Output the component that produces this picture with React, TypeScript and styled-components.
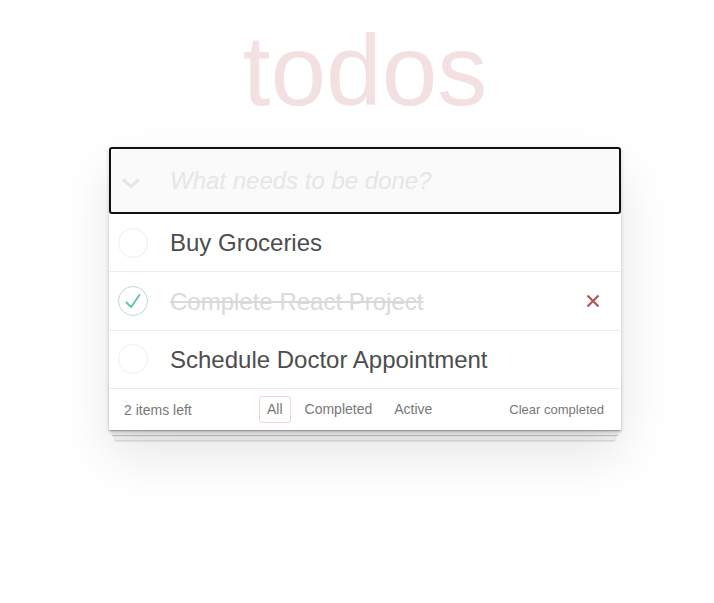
import React from 'react';
import styled, {createGlobalStyle} from 'styled-components';

type TodoType = {
    id: number
    title: string
    done: boolean
}

const todos: TodoType[] = [
    {id: 1, title: 'Buy Groceries', done: false},
    {id: 2, title: 'Complete React Project', done: true},
    {id: 3, title: 'Schedule Doctor Appointment', done: false},
]

const filters = ['All', 'Completed', 'Active']

const GlobalStyle = createGlobalStyle`
  body {
    margin: 0;
    background: #fff;
    font-family: "Liberation Sans", Arial, sans-serif;
    color: #4d4d4d;
  }
`

const Check = ({done}: {done: boolean}) => (
    <CheckBox $done={done}>
        {done && (
            <svg width="22" height="22" viewBox="0 0 22 22">
                <path d="M4.5 12.5 L9 17 L17.5 5" fill="none" stroke="#5dc2af" strokeWidth="1.8" strokeLinecap="round"/>
            </svg>
        )}
    </CheckBox>
)

export default function App() {
    const left = todos.filter(t => !t.done).length
    return (
        <Page>
            <GlobalStyle/>
            <Title>todos</Title>
            <Card>
                <Header>
                    <ToggleAll>
                        <svg width="20" height="12" viewBox="0 0 20 12">
                            <path d="M2 2.5 L10 9.5 L18 2.5" fill="none" stroke="#e6e6e6" strokeWidth="3"/>
                        </svg>
                    </ToggleAll>
                    <NewTodo placeholder="What needs to be done?"/>
                </Header>
                <List>
                    {todos.map(t => (
                        <Item key={t.id}>
                            <Check done={t.done}/>
                            <Label $done={t.done}>{t.title}</Label>
                            {t.done && (
                                <Destroy>
                                    <svg width="14" height="14" viewBox="0 0 14 14">
                                        <path d="M1.5 1.5 L12.5 12.5 M12.5 1.5 L1.5 12.5" stroke="#af5b5e" strokeWidth="2.4"/>
                                    </svg>
                                </Destroy>
                            )}
                        </Item>
                    ))}
                </List>
                <Footer>
                    <Count>{left} items left</Count>
                    <Filters>
                        {filters.map(f => (
                            <Filter key={f} $active={f === 'All'}>{f}</Filter>
                        ))}
                    </Filters>
                    <Clear>Clear completed</Clear>
                </Footer>
            </Card>
        </Page>
    );
}

const Page = styled.div`
  display: flex;
  flex-direction: column;
  align-items: center;
  padding-left: 16px;
  padding-top: 20px;
  min-height: 100vh;
  box-sizing: border-box;
`
const Title = styled.h1`
  margin: 0 0 27px;
  font-size: 100px;
  font-weight: 100;
  line-height: 100px;
  color: rgba(175, 47, 47, 0.15);
  text-align: center;
`
const Card = styled.section`
  position: relative;
  width: 512px;
  background: #fff;
  box-shadow: 0 2px 4px 0 rgba(0, 0, 0, 0.2), 0 25px 50px 0 rgba(0, 0, 0, 0.1);
`
const Header = styled.header`
  display: flex;
  align-items: center;
  height: 67px;
  box-sizing: border-box;
  border: 2px solid #111;
  border-radius: 3px;
  background: #fafafa;
`
const ToggleAll = styled.div`
  width: 59px;
  padding-left: 10px;
  box-sizing: border-box;
  display: flex;
  align-items: center;
  padding-top: 4px;
`
const NewTodo = styled.input`
  flex: 1;
  border: none;
  outline: none;
  background: transparent;
  font-family: inherit;
  font-size: 24px;
  color: #4d4d4d;
  padding: 0;

  &::placeholder {
    font-style: italic;
    color: #e6e6e6;
  }
`
const List = styled.ul`
  margin: 0;
  padding: 0;
  list-style: none;
`
const Item = styled.li`
  display: flex;
  align-items: center;
  height: 58.4px;
  box-sizing: border-box;
  border-bottom: 1px solid #ededed;
  padding-left: 9px;
  padding-right: 21px;
`
const CheckBox = styled.span<{ $done: boolean }>`
  width: 30px;
  height: 30px;
  box-sizing: border-box;
  border-radius: 50%;
  border: 1px solid ${p => p.$done ? '#bddad5' : '#ededed'};
  display: flex;
  align-items: center;
  justify-content: center;
  margin-right: 22px;
  flex-shrink: 0;
`
const Label = styled.label<{ $done: boolean }>`
  flex: 1;
  font-size: 24px;
  line-height: 28px;
  padding-top: 1px;
  color: ${p => p.$done ? '#d9d9d9' : '#4d4d4d'};
  text-decoration: ${p => p.$done ? 'line-through' : 'none'};
`
const Destroy = styled.button`
  border: none;
  background: none;
  padding: 0;
  display: flex;
`
const Footer = styled.footer`
  position: relative;
  display: flex;
  align-items: center;
  height: 41px;
  box-sizing: border-box;
  padding: 0 17px 0 15px;
  color: #777;
  font-size: 14px;

  &::before {
    content: "";
    position: absolute;
    left: 0;
    right: 0;
    bottom: 0;
    height: 50px;
    overflow: hidden;
    z-index: -1;
    box-shadow: 0 1px 1px rgba(0, 0, 0, 0.2),
    0 8px 0 -3px #f6f6f6,
    0 9px 1px -3px rgba(0, 0, 0, 0.2),
    0 16px 0 -6px #f6f6f6,
    0 17px 2px -6px rgba(0, 0, 0, 0.2);
  }
`
const Count = styled.span`
  width: 132px;
`
const Filters = styled.ul`
  display: flex;
  margin: 0;
  padding: 0;
  list-style: none;
`
const Filter = styled.li<{ $active: boolean }>`
  margin: 0 3px;
  padding: 3px 7px;
  line-height: 19px;
  border: 1px solid ${p => p.$active ? 'rgba(175, 47, 47, 0.2)' : 'transparent'};
  border-radius: 3px;
`
const Clear = styled.span`
  margin-left: auto;
  font-size: 13px;
`
